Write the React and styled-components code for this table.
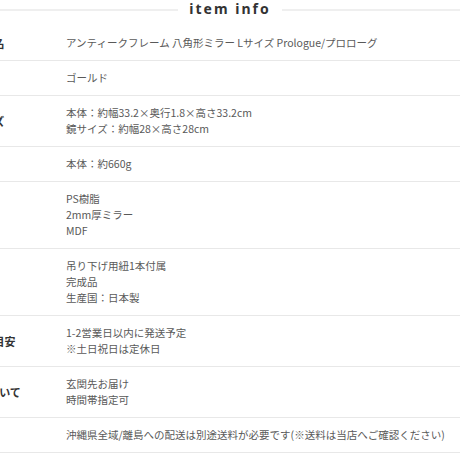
import React from "react";
import styled, { createGlobalStyle } from "styled-components";

const GlobalStyle = createGlobalStyle`
  html, body {
    margin: 0;
    padding: 0;
    background: #fff;
    overflow: hidden;
  }
  body {
    font-family: "Noto Sans CJK JP", "Noto Sans", sans-serif;
  }
`;

const Wrapper = styled.div`
  width: 460px;
  height: 460px;
  overflow: hidden;
`;

const TitleRow = styled.div`
  display: flex;
  align-items: center;
  height: 20px;
  gap: 11px;
`;

const TitleLine = styled.div`
  flex: 1;
  height: 2px;
  background: #efefef;
`;

const Title = styled.h2`
  margin: 0;
  font-family: "Noto Sans", "Open Sans", sans-serif;
  font-size: 14px;
  font-weight: 700;
  letter-spacing: 2px;
  line-height: 20px;
  color: #333;
  margin-top: -2px;
`;

const Table = styled.div`
  display: grid;
  grid-template-columns: 100px 1fr;
  margin-top: 6px;
  margin-left: -62px;
`;

const Label = styled.div`
  padding: 9px 0;
  border-bottom: 1px solid #e8e8e8;
  text-align: center;
  font-size: 11px;
  line-height: 16px;
  font-weight: 700;
  color: #333;
  display: flex;
  align-items: center;
  justify-content: center;
  white-space: nowrap;
`;

const Value = styled.div`
  padding: 9px 0 9px 28px;
  border-bottom: 1px solid #e8e8e8;
  font-size: 10.5px;
  line-height: 16px;
  color: #595959;
  white-space: nowrap;
`;

const rows = [
  ["商品名", ["アンティークフレーム 八角形ミラー Lサイズ Prologue/プロローグ"]],
  ["色", ["ゴールド"]],
  ["サイズ", ["本体：約幅33.2×奥行1.8×高さ33.2cm", "鏡サイズ：約幅28×高さ28cm"]],
  ["重量", ["本体：約660g"]],
  ["素材", ["PS樹脂", "2mm厚ミラー", "MDF"]],
  ["仕様", ["吊り下げ用紐1本付属", "完成品", "生産国：日本製"]],
  ["発送の目安", ["1-2営業日以内に発送予定", "※土日祝日は定休日"]],
  ["配送について", ["玄関先お届け", "時間帯指定可"]],
  ["送料", ["沖縄県全域/離島への配送は別途送料が必要です(※送料は当店へご確認ください)"]],
];

export default function App() {
  return (
    <Wrapper>
      <GlobalStyle />
      <TitleRow>
        <TitleLine />
        <Title>item info</Title>
        <TitleLine />
      </TitleRow>
      <Table>
        {rows.map(([label, lines]) => (
          <React.Fragment key={label}>
            <Label>{label}</Label>
            <Value>
              {lines.map((line) => (
                <div key={line}>{line}</div>
              ))}
            </Value>
          </React.Fragment>
        ))}
      </Table>
    </Wrapper>
  );
}
